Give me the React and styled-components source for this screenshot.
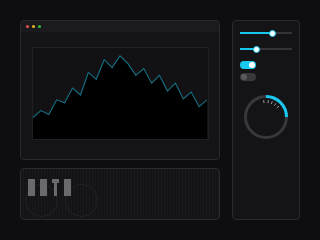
import styled, { createGlobalStyle } from 'styled-components'

const colors = {
  page: '#0e0e10',
  panel: '#141417',
  border: '#2a2a2f',
  titleBar: '#1b1b1f',
  cyan: '#19c8f0',
  line: '#167085',
  gray: '#6a6a6c',
}

const General = createGlobalStyle`
  html, body {
    margin: 0;
    background: ${colors.page};
    font-family: 'Inter', 'Liberation Sans', sans-serif;
  }
  * { box-sizing: border-box; }
`

const Page = styled.div`
  width: 320px;
  height: 240px;
  padding: 20px;
  display: grid;
  grid-template-columns: 200px 68px;
  column-gap: 12px;
`

const LeftColumn = styled.div`
  display: flex;
  flex-direction: column;
  gap: 8px;
`

const Panel = styled.div`
  background: ${colors.panel};
  border: 1px solid ${colors.border};
  border-radius: 4px;
  overflow: hidden;
`

const MainPanel = styled(Panel)`
  height: 140px;
  display: flex;
  flex-direction: column;
`

const TitleBar = styled.div`
  height: 11px;
  background: ${colors.titleBar};
  display: flex;
  align-items: center;
  gap: 3px;
  padding-left: 5px;
`

const Dot = styled.span`
  width: 3px;
  height: 3px;
  border-radius: 50%;
  background: ${p => p.$color};
`

const ChartBox = styled.div`
  margin: 15px 10px 0 11px;
  height: 93px;
  border: 1px solid #202024;
  background: #121215;
`

const BottomPanel = styled(Panel)`
  height: 52px;
  position: relative;
  padding: 10px 0 0 7px;
  background:
    repeating-linear-gradient(90deg, transparent 0 2px, rgba(255,255,255,0.018) 2px 3px),
    ${colors.panel};
`

const Bars = styled.div`
  display: flex;
  gap: 5px;
  position: relative;
  z-index: 1;
`

const Bar = styled.div`
  width: 7px;
  height: 17px;
  background: ${colors.gray};
`

const TBar = styled.div`
  width: 7px;
  height: 17px;
  display: flex;
  flex-direction: column;
  align-items: center;
  &::before {
    content: '';
    width: 7px;
    height: 4px;
    background: ${colors.gray};
  }
  &::after {
    content: '';
    width: 3px;
    flex: 1;
    background: ${colors.gray};
  }
`

const Ring = styled.div`
  position: absolute;
  top: 15px;
  left: ${p => p.$left}px;
  width: 33px;
  height: 33px;
  border-radius: 50%;
  border: 1px solid #232328;
`

const SidePanel = styled(Panel)`
  height: 200px;
  padding: 7px 0 0 7px;
  display: flex;
  flex-direction: column;
`

const Slider = styled.div`
  position: relative;
  width: 52px;
  height: 8px;
  margin-top: ${p => p.$top}px;
  display: flex;
  align-items: center;
`

const Track = styled.div`
  width: 100%;
  height: 2px;
  background: linear-gradient(90deg, ${colors.cyan} 0 ${p => p.$pct}%, #343438 ${p => p.$pct}% 100%);
`

const Thumb = styled.div`
  position: absolute;
  top: 0.5px;
  left: calc(${p => p.$pct}% - 3.5px);
  width: 7px;
  height: 7px;
  border-radius: 50%;
  background: #fff;
  border: 1.5px solid ${colors.cyan};
`

const Toggle = styled.div`
  width: 16px;
  height: 8px;
  border-radius: 4px;
  margin-top: ${p => p.$top}px;
  background: ${p => (p.$on ? colors.cyan : '#38383c')};
  display: flex;
  align-items: center;
  justify-content: ${p => (p.$on ? 'flex-end' : 'flex-start')};
  padding: 0 1px;
`

const Knob = styled.div`
  width: 6px;
  height: 6px;
  border-radius: 50%;
  background: ${p => (p.$on ? '#fff' : '#5a5a5e')};
`

const GaugeWrap = styled.div`
  margin: 12px 0 0 2px;
  width: 48px;
  height: 48px;
`

const points = [
  [31, 119], [40, 111], [48, 115], [56, 100], [64, 103], [72, 88], [80, 95],
  [88, 72], [96, 79], [104, 59], [112, 67], [120, 55], [128, 63], [136, 75],
  [144, 68], [152, 83], [160, 75], [168, 91], [176, 83], [184, 99], [192, 92],
  [200, 107], [208, 100],
].map(([x, y]) => [x - 32, y - 47])

function Chart() {
  const line = points.map(p => p.join(',')).join(' ')
  const area = `0,93 ${line} 176,93`
  return (
    <svg width="174" height="91" viewBox="0 0 176 93" preserveAspectRatio="none">
      <polygon points={area} fill="#000" />
      <polyline points={line} fill="none" stroke={colors.line} strokeWidth="1.1" />
    </svg>
  )
}

function Gauge() {
  const c = 24
  const r = 20.5
  const ticks = [-8, 8, 22, 36, 50]
  return (
    <svg width="48" height="48" viewBox="0 0 48 48">
      <circle cx={c} cy={c} r={r} fill="none" stroke="#38383c" strokeWidth="3" />
      <path d={`M ${c} ${c - r} A ${r} ${r} 0 0 1 ${c + r} ${c}`} fill="none" stroke={colors.cyan} strokeWidth="3" />
      {ticks.map(a => {
        const rad = (a - 90) * Math.PI / 180
        const x1 = c + Math.cos(rad) * 14
        const y1 = c + Math.sin(rad) * 14
        const x2 = c + Math.cos(rad) * 17
        const y2 = c + Math.sin(rad) * 17
        return <line key={a} x1={x1} y1={y1} x2={x2} y2={y2} stroke="#9a9a9c" strokeWidth="1" />
      })}
    </svg>
  )
}

export default function App() {
  return (
    <>
      <General />
      <Page>
        <LeftColumn>
          <MainPanel>
            <TitleBar>
              <Dot $color="#e0524c" />
              <Dot $color="#e3b523" />
              <Dot $color="#2fc13a" />
            </TitleBar>
            <ChartBox>
              <Chart />
            </ChartBox>
          </MainPanel>
          <BottomPanel>
            <Ring $left={4} />
            <Ring $left={44} />
            <Bars>
              <Bar />
              <Bar />
              <TBar />
              <Bar />
            </Bars>
          </BottomPanel>
        </LeftColumn>
        <SidePanel>
          <Slider $top={1}>
            <Track $pct={62} />
            <Thumb $pct={62} />
          </Slider>
          <Slider $top={8}>
            <Track $pct={31} />
            <Thumb $pct={31} />
          </Slider>
          <Toggle $on $top={8}>
            <Knob $on />
          </Toggle>
          <Toggle $top={4}>
            <Knob />
          </Toggle>
          <GaugeWrap>
            <Gauge />
          </GaugeWrap>
        </SidePanel>
      </Page>
    </>
  )
}
